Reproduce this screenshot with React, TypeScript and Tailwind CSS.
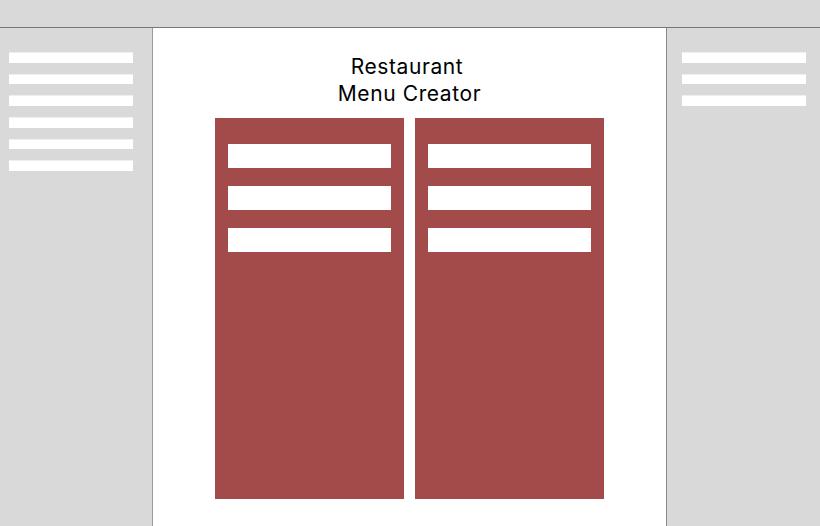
import React from "react";

const Bar = () => <div className="h-[10.7px] w-[124px] bg-white border-t border-[#efefef]" />;

const Input = () => <div className="h-[24px] w-full bg-white" />;

const Panel = () => (
  <div className="w-[189px] h-[381px] bg-[#a34b4b] px-[13px] pt-[26px] flex flex-col gap-[18px]">
    <Input />
    <Input />
    <Input />
  </div>
);

export default function App() {
  return (
    <div
      className="w-[820px] h-[526px] flex flex-col bg-[#d9d9d9] overflow-hidden"
      style={{ fontFamily: "Inter, 'Noto Sans', sans-serif" }}
    >
      <div className="h-[28px] shrink-0 border-b border-[#767676] bg-[#d9d9d9]" />
      <div className="flex flex-1 min-h-0">
        <div className="w-[153px] shrink-0 border-r border-[#9a9a9a] bg-[#d9d9d9] pt-[24px] pl-[9px] flex flex-col gap-[11px]">
          <Bar />
          <Bar />
          <Bar />
          <Bar />
          <Bar />
          <Bar />
        </div>
        <div className="flex-1 bg-white flex flex-col items-center pt-[24.8px]">
          <div className="text-[21px] leading-[27px] tracking-[0.6px] text-black text-center">
            <div className="pr-[5px]">Restaurant</div>
            <div>Menu Creator</div>
          </div>
          <div className="mt-[11.2px] flex gap-[11px]">
            <Panel />
            <Panel />
          </div>
        </div>
        <div className="w-[154px] shrink-0 border-l border-[#8a8a8a] bg-[#d9d9d9] pt-[24px] pl-[15px] flex flex-col gap-[11px]">
          <Bar />
          <Bar />
          <Bar />
        </div>
      </div>
    </div>
  );
}
